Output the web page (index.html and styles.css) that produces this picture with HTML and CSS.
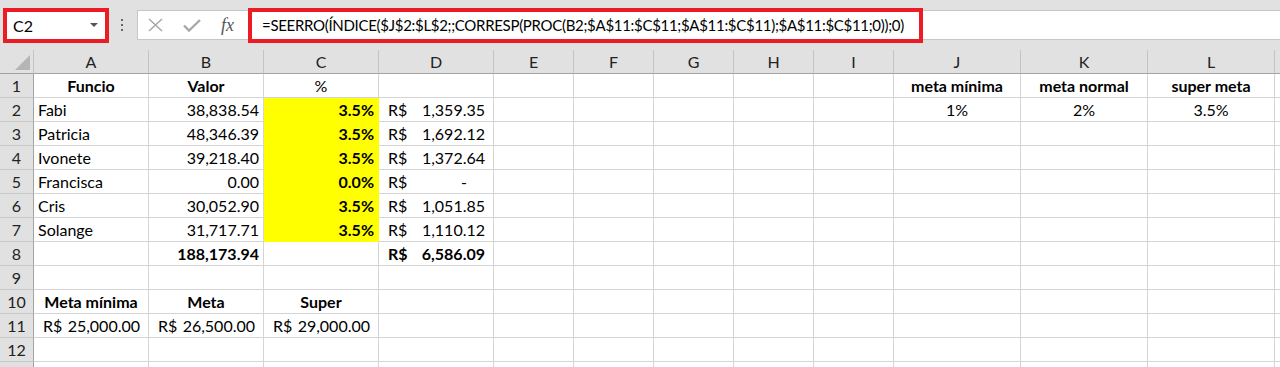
FILE: index.html
```html
<!DOCTYPE html>
<html lang="pt">
<head>
  <meta charset="UTF-8" />
  <title>Metas</title>
  <link rel="stylesheet" href="styles.css">
</head>
<body>
  <!-- barra de fórmulas -->
  <div class="topbar">
    <div class="namebox">
      <span>C2</span>
      <span class="caret"></span>
    </div>
    <svg class="dots" width="4" height="14" viewBox="0 0 4 14">
      <rect x="1" y="0" width="2" height="2" fill="#666"/>
      <rect x="1" y="5" width="2" height="2" fill="#666"/>
      <rect x="1" y="10" width="2" height="2" fill="#666"/>
    </svg>
    <div class="fbar">
      <div class="fbtns">
        <svg width="15" height="14" viewBox="0 0 15 14">
          <path d="M1 1 L14 13 M14 1 L1 13" stroke="#a8a8a8" stroke-width="1.6" fill="none"/>
        </svg>
        <svg width="18" height="13" viewBox="0 0 18 13">
          <path d="M1 6.5 L6 11.5 L17 1" stroke="#a8a8a8" stroke-width="2.4" fill="none"/>
        </svg>
        <span class="fx">fx</span>
      </div>
      <div class="formula">=SEERRO(ÍNDICE($J$2:$L$2;;CORRESP(PROC(B2;$A$11:$C$11;$A$11:$C$11);$A$11:$C$11;0));0)</div>
    </div>
  </div>

  <!-- planilha -->
  <table class="sheet">
    <colgroup>
      <col class="w-rh"><col class="w-ad"><col class="w-ad"><col class="w-ad"><col class="w-ad">
      <col class="w-e"><col class="w-e"><col class="w-e"><col class="w-e"><col class="w-e">
      <col class="w-j"><col class="w-j"><col class="w-j"><col class="w-m">
    </colgroup>
    <thead>
      <tr>
        <th class="corner"><span class="tri"></span></th>
        <th>A</th><th>B</th><th>C</th><th>D</th><th>E</th><th>F</th><th>G</th>
        <th>H</th><th>I</th><th>J</th><th>K</th><th>L</th><th></th>
      </tr>
    </thead>
    <tbody>
      <tr>
        <th>1</th>
        <td class="c b">Funcio</td><td class="c b">Valor</td><td class="c">%</td><td></td>
        <td></td><td></td><td></td><td></td><td></td>
        <td class="c b">meta mínima</td><td class="c b">meta normal</td><td class="c b">super meta</td><td></td>
      </tr>
      <tr>
        <th>2</th>
        <td>Fabi</td><td class="r">38,838.54</td><td class="r b y">3.5%</td>
        <td class="p0"><div class="acc"><span>R$</span><span>1,359.35</span></div></td>
        <td></td><td></td><td></td><td></td><td></td>
        <td class="c">1%</td><td class="c">2%</td><td class="c">3.5%</td><td></td>
      </tr>
      <tr>
        <th>3</th>
        <td>Patricia</td><td class="r">48,346.39</td><td class="r b y">3.5%</td>
        <td class="p0"><div class="acc"><span>R$</span><span>1,692.12</span></div></td>
        <td></td><td></td><td></td><td></td><td></td><td></td><td></td><td></td><td></td>
      </tr>
      <tr>
        <th>4</th>
        <td>Ivonete</td><td class="r">39,218.40</td><td class="r b y">3.5%</td>
        <td class="p0"><div class="acc"><span>R$</span><span>1,372.64</span></div></td>
        <td></td><td></td><td></td><td></td><td></td><td></td><td></td><td></td><td></td>
      </tr>
      <tr>
        <th>5</th>
        <td>Francisca</td><td class="r">0.00</td><td class="r b y">0.0%</td>
        <td class="p0"><div class="acc"><span>R$</span><span class="dash">-</span></div></td>
        <td></td><td></td><td></td><td></td><td></td><td></td><td></td><td></td><td></td>
      </tr>
      <tr>
        <th>6</th>
        <td>Cris</td><td class="r">30,052.90</td><td class="r b y">3.5%</td>
        <td class="p0"><div class="acc"><span>R$</span><span>1,051.85</span></div></td>
        <td></td><td></td><td></td><td></td><td></td><td></td><td></td><td></td><td></td>
      </tr>
      <tr>
        <th>7</th>
        <td>Solange</td><td class="r">31,717.71</td><td class="r b y">3.5%</td>
        <td class="p0"><div class="acc"><span>R$</span><span>1,110.12</span></div></td>
        <td></td><td></td><td></td><td></td><td></td><td></td><td></td><td></td><td></td>
      </tr>
      <tr>
        <th>8</th>
        <td></td><td class="r b">188,173.94</td><td></td>
        <td class="p0 b"><div class="acc"><span>R$</span><span>6,586.09</span></div></td>
        <td></td><td></td><td></td><td></td><td></td><td></td><td></td><td></td><td></td>
      </tr>
      <tr>
        <th>9</th>
        <td></td><td></td><td></td><td></td><td></td><td></td><td></td><td></td><td></td><td></td><td></td><td></td><td></td>
      </tr>
      <tr>
        <th>10</th>
        <td class="c b">Meta mínima</td><td class="c b">Meta</td><td class="c b">Super</td>
        <td></td><td></td><td></td><td></td><td></td><td></td><td></td><td></td><td></td><td></td>
      </tr>
      <tr>
        <th>11</th>
        <td class="p0"><div class="acc"><span>R$</span><span>25,000.00</span></div></td>
        <td class="p0"><div class="acc"><span>R$</span><span>26,500.00</span></div></td>
        <td class="p0"><div class="acc"><span>R$</span><span>29,000.00</span></div></td>
        <td></td><td></td><td></td><td></td><td></td><td></td><td></td><td></td><td></td><td></td>
      </tr>
      <tr>
        <th>12</th>
        <td></td><td></td><td></td><td></td><td></td><td></td><td></td><td></td><td></td><td></td><td></td><td></td><td></td>
      </tr>
      <tr>
        <th></th>
        <td></td><td></td><td></td><td></td><td></td><td></td><td></td><td></td><td></td><td></td><td></td><td></td><td></td>
      </tr>
    </tbody>
  </table>
</body>
</html>
```

FILE: styles.css
```css
body { margin: 0; font-family: Lato, "Liberation Sans", sans-serif; font-size: 16px; color: #000; background: #fff; overflow: hidden; }

/* barra de fórmulas */
.topbar { height: 50px; background: #e1e1e1; display: flex; align-items: center; padding-left: 3px; box-sizing: border-box; }
.namebox {
  width: 106px;
  height: 35px;
  box-sizing: border-box;
  border: 4px solid #ec1c24;
  background: #fff;
  display: flex;
  align-items: center;
  justify-content: space-between;
  padding: 0 7px 0 6px;
}
.caret { border-left: 4px solid transparent; border-right: 4px solid transparent; border-top: 4px solid #555; }
.dots { margin-left: 11px; margin-top: 2px; }
.fbar {
  flex: 1;
  height: 30px;
  box-sizing: border-box;
  margin-left: 13px;
  background: #fff;
  border: 1px solid #c6c6c6;
  border-right: none;
  display: flex;
  align-items: center;
}
.fbtns { width: 110px; flex: none; display: flex; align-items: center; padding-left: 10px; gap: 20px; box-sizing: border-box; }
.fx { font-family: "Liberation Serif", serif; font-style: italic; font-size: 18px; color: #555; }
.formula {
  flex: none;
  width: 675px;
  height: 35px;
  box-sizing: border-box;
  border: 4px solid #ec1c24;
  padding-left: 10px;
  font-size: 15px;
  letter-spacing: -0.3px;
  line-height: 27px;
  white-space: nowrap;
}

/* planilha */
.sheet { border-collapse: separate; border-spacing: 0; table-layout: fixed; width: 1335px; }
.w-rh { width: 34px; }
.w-ad { width: 115px; }
.w-e { width: 80px; }
.w-j { width: 127px; }
.w-m { width: 60px; }
.sheet th {
  background: #e1e1e1;
  font-weight: normal;
  color: #222;
  height: 23px;
  padding: 0;
  line-height: 23px;
}
.sheet thead th { border-right: 1px solid #c3c3c3; border-bottom: 1px solid #a3a3a3; }
.sheet tbody th { border-right: 1px solid #a3a3a3; border-bottom: 1px solid #c8c8c8; }
.sheet td {
  height: 23px;
  padding: 0 4px;
  line-height: 23px;
  border-right: 1px solid #d4d4d4;
  border-bottom: 1px solid #d4d4d4;
  white-space: nowrap;
  overflow: hidden;
}
.corner { position: relative; }
.tri {
  position: absolute;
  right: 3px;
  bottom: 3px;
  width: 0;
  height: 0;
  border-left: 15px solid transparent;
  border-bottom: 15px solid #b5b5b5;
}
.c { text-align: center; }
.r { text-align: right; }
.b { font-weight: bold; }
.y { background: #ffff00; border-color: #ffff00 !important; }
.sheet td.p0 { padding: 0; }
.acc { display: flex; justify-content: space-between; padding: 0 8px 0 9px; }
.dash { padding-right: 18px; }
```
